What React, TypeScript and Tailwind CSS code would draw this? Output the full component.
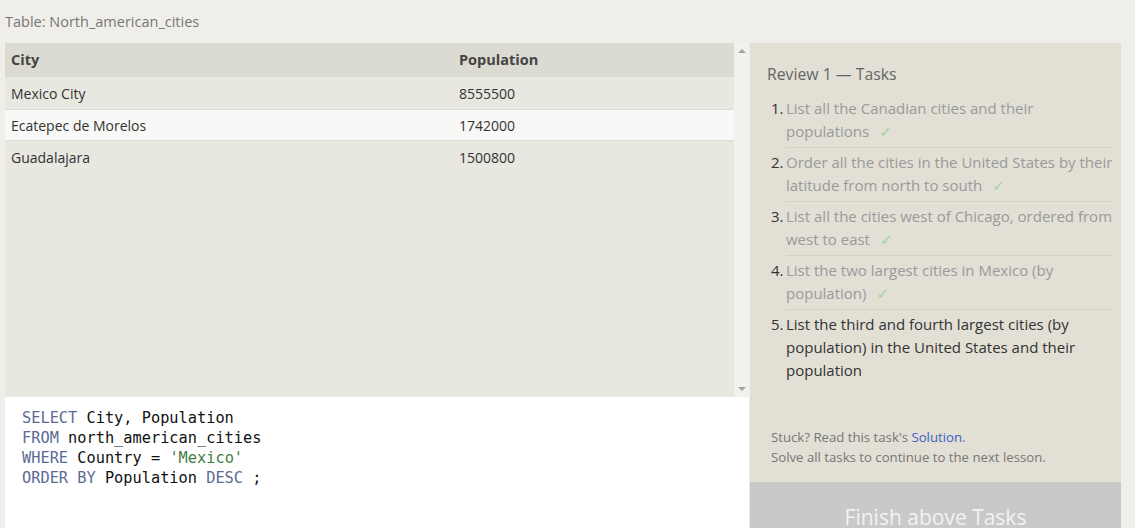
const rows = [
  { city: 'Mexico City', pop: '8555500' },
  { city: 'Ecatepec de Morelos', pop: '1742000' },
  { city: 'Guadalajara', pop: '1500800' },
];

const tasks = [
  { text: 'List all the Canadian cities and their populations', done: true },
  { text: 'Order all the cities in the United States by their latitude from north to south', done: true },
  { text: 'List all the cities west of Chicago, ordered from west to east', done: true },
  { text: 'List the two largest cities in Mexico (by population)', done: true },
  { text: 'List the third and fourth largest cities (by population) in the United States and their population', done: false },
];

function Check() {
  return <span className="ml-[10px] font-['DejaVu_Sans',sans-serif] text-[15px] leading-[10px] text-[#9fd49f]">✓</span>;
}

export default function App() {
  return (
    <div className="min-h-screen bg-[#f0eee8] font-['Open_Sans',sans-serif] text-[#333]">
      <div className="flex">
        {/* left: table + editor */}
        <div className="w-[749px] flex flex-col">
          <div className="h-[43px] pl-[5px] pt-[11px] text-[14.5px] text-[#777]">Table: North_american_cities</div>
          <div className="ml-[5px] flex h-[354px] bg-[#e8e7e0]">
            <div className="flex-1">
              <div className="flex h-[34px] items-center bg-[#dcdbd1] text-[14.5px] font-bold text-[#444]">
                <div className="w-[454px] pl-[6px]">City</div>
                <div>Population</div>
              </div>
              {rows.map((r, i) => (
                <div
                  key={r.city}
                  className={`flex h-[32px] items-center text-[14px] ${i === 1 ? 'bg-[#f8f8f7] border-y border-[#dedcd4]' : 'bg-[#e8e7e0]'}`}
                >
                  <div className="w-[454px] pl-[6px]">{r.city}</div>
                  <div>{r.pop}</div>
                </div>
              ))}
            </div>
            <div className="w-[15px] bg-[#f1f1f0] flex flex-col items-center justify-between py-[6px]">
              <div className="w-0 h-0 border-l-[4px] border-r-[4px] border-b-[4px] border-l-transparent border-r-transparent border-b-[#a3a3a3]" />
              <div className="w-0 h-0 border-l-[4px] border-r-[4px] border-t-[4px] border-l-transparent border-r-transparent border-t-[#a3a3a3]" />
            </div>
          </div>
          <div className="ml-[5px] h-[160px] bg-white pl-[17px] pt-[11px] font-['DejaVu_Sans_Mono',monospace] text-[15.3px] leading-[20px] text-[#111] relative">
            <div><span className="text-[#5c6b96]">SELECT</span> City, Population</div>
            <div><span className="text-[#5c6b96]">FROM</span> north_american_cities</div>
            <div><span className="text-[#5c6b96]">WHERE</span> Country = <span className="text-[#3f7f3f]">'Mexico'</span></div>
            <div><span className="text-[#5c6b96]">ORDER BY</span> Population <span className="text-[#5c6b96]">DESC</span> ;</div>
            <div className="absolute right-[10px] top-[126px] font-['Open_Sans',sans-serif] text-[11px] font-bold tracking-wide text-[#d6d6d6]">RESET</div>
          </div>
        </div>

        {/* right: tasks */}
        <div className="ml-[1px] mt-[43px] w-[371px] flex flex-col">
          <div className="h-[439px] bg-[#e2dfd5] flex flex-col">
            <div className="pl-[17px] pt-[20px] text-[15.8px] text-[#666]">Review 1 — Tasks</div>
            <ol className="mt-[7px] pl-[21px] pr-[8px]">
              {tasks.map((t, i) => (
                <li key={i} className="flex text-[15px] leading-[23px]">
                  <span className="w-[15px] shrink-0 pt-[3px] text-[#333]">{i + 1}.</span>
                  <div
                    className={`flex-1 pt-[3px] pb-[4px] ${i < tasks.length - 1 ? 'border-b border-[#d4d1c7]' : ''} ${t.done ? 'text-[#9a9a9a]' : 'text-[#333]'}`}
                  >
                    {t.text}
                    {t.done && <Check />}
                  </div>
                </li>
              ))}
            </ol>
            <div className="mt-auto pb-[15px] pl-[21px] text-[13.2px] leading-[20px] text-[#777]">
              <div>
                Stuck? Read this task's <span className="text-[#3a62c4]">Solution</span>.
              </div>
              <div>Solve all tasks to continue to the next lesson.</div>
            </div>
          </div>
          <div className="h-[70px] bg-[#c9c9c9] flex justify-center pt-[20px] text-[21px] text-[#f2f2f2]">Finish above Tasks</div>
        </div>
      </div>
    </div>
  );
}
